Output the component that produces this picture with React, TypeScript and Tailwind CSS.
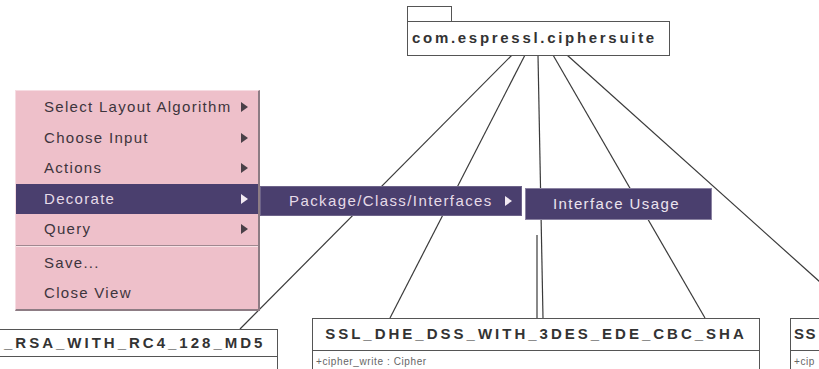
const font = "font-['Liberation_Sans',Arial,sans-serif]";

const Arrow = ({ light }: { light?: boolean }) => (
  <svg width="7" height="10" viewBox="0 0 7 10" className="shrink-0">
    <polygon points="0,0 7,5 0,10" fill={light ? "#f2eaf2" : "#4a4048"} />
  </svg>
);

type Item = { label: string; sub?: boolean; active?: boolean };

const topItems: Item[] = [
  { label: "Select Layout Algorithm", sub: true },
  { label: "Choose Input", sub: true },
  { label: "Actions", sub: true },
  { label: "Decorate", sub: true, active: true },
  { label: "Query", sub: true },
];

const bottomItems: Item[] = [{ label: "Save..." }, { label: "Close View" }];

const MenuRow = ({ item, h }: { item: Item; h: string }) => (
  <div
    className={`flex items-center justify-between pl-[28px] pr-[10px] ${h} ${
      item.active ? "bg-[#4a3f6e] text-[#e6dbe8]" : "text-[#3d353d]"
    }`}
  >
    <span>{item.label}</span>
    {item.sub && <Arrow light={item.active} />}
  </div>
);

export default function App() {
  return (
    <div className={`relative w-[819px] h-[369px] overflow-hidden bg-white ${font}`}>
      {/* edges of the package diagram */}
      <svg className="absolute inset-0" width="819" height="369">
        <g stroke="#3a3a3a" strokeWidth="1.2" fill="none">
          <line x1="512" y1="55" x2="240" y2="329" />
          <line x1="525" y1="55" x2="390" y2="318" />
          <line x1="538" y1="55" x2="543" y2="318" />
          <line x1="537" y1="235" x2="537" y2="318" />
          <line x1="553" y1="55" x2="705" y2="318" />
          <line x1="567" y1="55" x2="830" y2="291" />
        </g>
      </svg>

      {/* package node */}
      <div className="absolute left-[407px] top-[6px] flex flex-col">
        <div className="w-[45px] h-[15px] border border-b-0 border-[#555] bg-white" />
        <div className="w-[263px] h-[35px] border border-[#555] bg-white flex items-center pl-[4px] text-[15px] font-bold tracking-[2.7px] text-[#333]">
          com.espressl.ciphersuite
        </div>
      </div>

      {/* class nodes */}
      <div className="absolute left-[-2px] top-[329px] w-[280px] h-[60px] border border-[#555] bg-white flex flex-col">
        <div className="h-[27px] border-b border-[#555] flex items-center pl-[5px] text-[15px] font-bold tracking-[3px] text-[#333]">
          _RSA_WITH_RC4_128_MD5
        </div>
      </div>

      <div className="absolute left-[312px] top-[318px] w-[448px] h-[70px] border border-[#555] bg-white flex flex-col">
        <div className="h-[32px] border-b border-[#555] flex items-center justify-center text-[15px] font-bold tracking-[3px] text-[#333]">
          SSL_DHE_DSS_WITH_3DES_EDE_CBC_SHA
        </div>
        <div className="pl-[3px] pt-[3px] text-[10px] tracking-[0.6px] text-[#666]">+cipher_write : Cipher</div>
      </div>

      <div className="absolute left-[790px] top-[318px] w-[120px] h-[70px] border border-[#555] bg-white flex flex-col">
        <div className="h-[32px] border-b border-[#555] flex items-center pl-[3px] text-[15px] font-bold tracking-[1.5px] text-[#333]">
          SS
        </div>
        <div className="pl-[3px] pt-[3px] text-[10px] tracking-[0.6px] text-[#666]">+cip</div>
      </div>

      {/* popup menu */}
      <div className="absolute left-[15px] top-[90px] w-[245px] flex flex-col bg-[#eec0ca] border border-t-[#f6dce2] border-l-[#f6dce2] border-r-2 border-b-2 border-r-[#8d7c84] border-b-[#8d7c84] pt-[1px] text-[15px] tracking-[1.3px]">
        {topItems.map((it) => (
          <MenuRow key={it.label} item={it} h="h-[30.5px]" />
        ))}
        <div className="mb-[2px] h-[2px] border-t border-[#a08890] border-b border-b-[#f8e2e6]" />
        {bottomItems.map((it) => (
          <MenuRow key={it.label} item={it} h="h-[30px]" />
        ))}
      </div>

      <div className="absolute left-[260px] top-[186px] w-[262px] h-[30px] flex items-center justify-between pl-[28px] pr-[9px] bg-[#4a3f6e] border border-[#6d6389] text-[15px] tracking-[1.4px] text-[#e6dbe8]">
        <span>Package/Class/Interfaces</span>
        <Arrow light />
      </div>

      <div className="absolute left-[525px] top-[188px] w-[187px] h-[32px] flex items-center pl-[27px] bg-[#4a3f6e] border border-[#8b83a2] text-[15px] tracking-[1.4px] text-[#ece4ee]">
        Interface Usage
      </div>
    </div>
  );
}
